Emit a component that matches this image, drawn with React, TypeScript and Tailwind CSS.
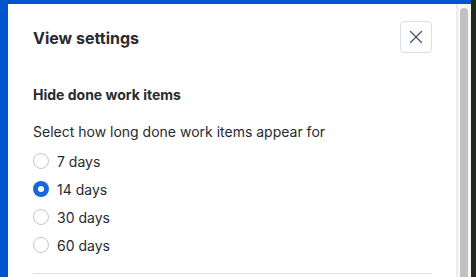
import { X } from "lucide-react";

const options = [
  { label: "7 days", checked: false },
  { label: "14 days", checked: true },
  { label: "30 days", checked: false },
  { label: "60 days", checked: false },
];

function Radio({ checked }: { checked: boolean }) {
  if (checked) {
    return (
      <span className="flex h-4 w-4 items-center justify-center rounded-full bg-[#1868db]">
        <span className="h-[6px] w-[6px] rounded-full bg-white" />
      </span>
    );
  }
  return <span className="h-4 w-4 rounded-full border border-[#c4c6cb] bg-white" />;
}

export default function App() {
  return (
    <div
      className="flex h-[277px] w-[476px] overflow-hidden bg-[#1f2a1c]"
      style={{ fontFamily: "Inter, 'Noto Sans', sans-serif" }}
    >
      <div className="flex w-[471px] flex-col bg-[#0055cc] pt-1">
        <div className="flex flex-1 pl-2">
          <div className="flex w-[448px] flex-col bg-white pl-[25px] pr-[24px] pt-[17px] text-[#292a2e]">
            <div className="flex h-8 items-center justify-between">
              <h1 className="mt-px text-[16px] font-bold">View settings</h1>
              <button
                type="button"
                className="flex h-8 w-8 items-center justify-center rounded border border-[#dcdfe4] text-[#44546f]"
              >
                <X size={22} strokeWidth={1.4} />
              </button>
            </div>

            <h2 className="mt-[32px] text-[14px] font-bold leading-5">Hide done work items</h2>
            <p className="mt-[17px] text-[14px] leading-5">Select how long done work items appear for</p>

            <div className="mt-[5px] flex flex-col">
              {options.map((o) => (
                <label key={o.label} className="flex h-7 items-center gap-2 text-[14px]">
                  <Radio checked={o.checked} />
                  <span>{o.label}</span>
                </label>
              ))}
            </div>

            <div className="mt-[14px] h-px bg-[#dcdfe4]" />
          </div>
          <div className="flex w-[15px] border-l-2 border-[#ececec] bg-[#f7f7f7] pl-[2px] pt-1">
            <div className="h-full w-2 rounded-t-full bg-[#c1c1c1]" />
          </div>
        </div>
      </div>
    </div>
  );
}
